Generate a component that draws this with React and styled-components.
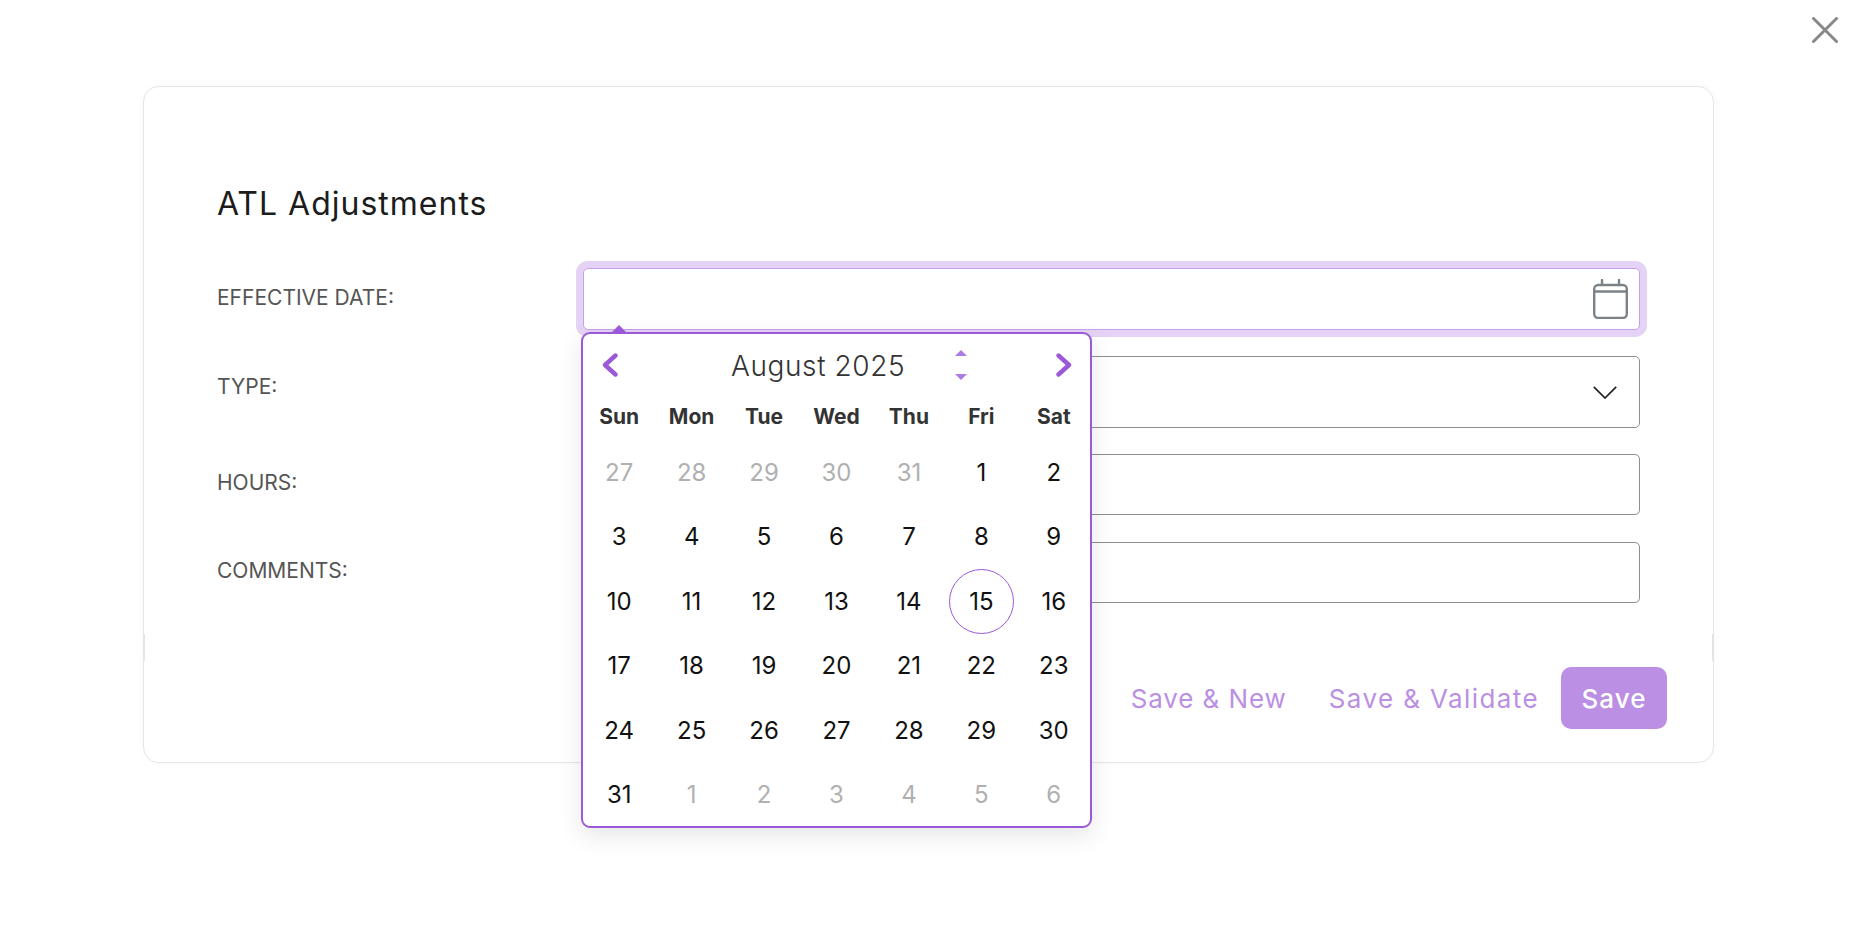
import styled, { createGlobalStyle } from 'styled-components'

const GlobalStyle = createGlobalStyle`
  html, body { margin: 0; padding: 0; background: #fff; }
  body { font-family: Inter, "Open Sans", "Liberation Sans", sans-serif; }
`

const purple = '#9b59d9'
const soft = '#bb8fe3'

const weekDays = ['Sun', 'Mon', 'Tue', 'Wed', 'Thu', 'Fri', 'Sat']

// muted days spill over from July and September
const days = [
  ...[27, 28, 29, 30, 31].map(d => ({ d, muted: true })),
  ...Array.from({ length: 31 }, (_, i) => ({ d: i + 1 })),
  ...[1, 2, 3, 4, 5, 6].map(d => ({ d, muted: true }))
]

function CloseIcon() {
  return <CloseSvg viewBox='0 0 26 26' fill='none' stroke='#888' strokeWidth='3' strokeLinecap='round'>
    <path d='M1.5 1.5 L24.5 24.5 M24.5 1.5 L1.5 24.5' />
  </CloseSvg>
}

function CalendarIcon() {
  return <CalendarSvg viewBox='0 0 35 40' fill='none' stroke='#7b8389' strokeWidth='2.4' strokeLinecap='round'>
    <rect x='1.2' y='6' width='32.6' height='33' rx='4' />
    <path d='M1.2 12.5 H33.8 M9 1 V6 M26 1 V6' />
  </CalendarSvg>
}

function ChevronDown() {
  return <ChevronSvg viewBox='0 0 24 13' fill='none' stroke='#222' strokeWidth='1.7'>
    <path d='M0.8 0.8 L12 12 L23.2 0.8' />
  </ChevronSvg>
}

function Arrow({ dir }) {
  return <ArrowSvg viewBox='0 0 16 24' fill='none' stroke={purple} strokeWidth='4.4' strokeLinecap='round' strokeLinejoin='round'>
    <path d={dir === 'left' ? 'M13.5 2.5 L3 12 L13.5 21.5' : 'M2.5 2.5 L13 12 L2.5 21.5'} />
  </ArrowSvg>
}

function Calendar() {
  return <Popover>
    <Header>
      <Arrow dir='left' />
      <MonthTitle>August 2025</MonthTitle>
      <Spinner>
        <SpinUp />
        <SpinDown />
      </Spinner>
      <NextSlot><Arrow dir='right' /></NextSlot>
    </Header>
    <Grid>
      {weekDays.map(w => <WeekDay key={w}>{w}</WeekDay>)}
    </Grid>
    <Grid>
      {days.map((x, i) => <Day key={i} $muted={x.muted}>
        {!x.muted && x.d === 15 ? <Today>{x.d}</Today> : x.d}
      </Day>)}
    </Grid>
  </Popover>
}

export default function App() {
  return <>
    <GlobalStyle />
    <Page>
      <CloseIcon />
      <Card>
        <Title>ATL Adjustments</Title>
        <Form>
          <Label $top={17}>EFFECTIVE DATE:</Label>
          <DateField>
            <Field $focus />
            <IconSlot><CalendarIcon /></IconSlot>
            <Calendar />
          </DateField>

          <Label $top={18}>TYPE:</Label>
          <SelectBox><ChevronDown /></SelectBox>

          <Label>HOURS:</Label>
          <Field />

          <Label $top={17}>COMMENTS:</Label>
          <Field $drop={1} />
        </Form>
        <Footer>
          <LinkButton $spacing={.9}>Save &amp; New</LinkButton>
          <LinkButton $spacing={1.4}>Save &amp; Validate</LinkButton>
          <SaveButton>Save</SaveButton>
        </Footer>
      </Card>
    </Page>
  </>
}

const Page = styled.div`
  position: relative;
  height: 941px;
  padding-top: 86px;
  box-sizing: border-box;
  overflow: hidden;
`

const CloseSvg = styled.svg`
  position: absolute;
  top: 17px; right: 20px;
  width: 26px; height: 26px;
`

const Card = styled.section`
  position: relative;
  box-sizing: border-box;
  width: 1571px; height: 677px;
  margin-left: 143px;
  padding: 98px 73px 0;
  background: #fff;
  border: 1px solid #e6e6e6;
  border-radius: 16px;
  box-shadow: 0 0 6px rgba(0, 0, 0, .03);

  &::before, &::after {
    content: '';
    position: absolute;
    top: 547px;
    width: 2px; height: 27px;
    background: #e4e4e4;
  }
  &::before { left: -1px; }
  &::after { right: -1px; }
`

const Title = styled.h1`
  margin: 0;
  font-size: 32px;
  font-weight: 400;
  line-height: 38px;
  letter-spacing: 1px;
  color: #1c1c1c;
`

const Form = styled.div`
  display: grid;
  grid-template-columns: 366px 1fr;
  row-gap: 26px;
  margin-top: 45px;
`

const Label = styled.label`
  padding-top: ${p => p.$top ?? 16}px;
  font-size: 21px;
  line-height: 26px;
  color: #555;
`

const Field = styled.input`
  display: block;
  box-sizing: border-box;
  width: 100%;
  height: ${p => p.$focus ? 62 : 61}px;
  margin-top: ${p => p.$drop ?? 0}px;
  background: #fff;
  border: 1px solid ${p => p.$focus ? '#c9a0ea' : '#8e8e8e'};
  border-radius: 5px;
  outline: none;
  box-shadow: ${p => p.$focus ? '0 0 0 7px #e4d3f4' : 'none'};
`

const DateField = styled.div`
  position: relative;
`

const IconSlot = styled.span`
  position: absolute;
  top: 11px; right: 12px;
  display: flex;
`

const CalendarSvg = styled.svg`
  width: 35px; height: 40px;
`

const SelectBox = styled.div`
  display: flex;
  align-items: center;
  justify-content: flex-end;
  box-sizing: border-box;
  height: 72px;
  padding-right: 22px;
  border: 1px solid #8e8e8e;
  border-radius: 5px;
`

const ChevronSvg = styled.svg`
  width: 24px; height: 13px;
`

const Footer = styled.div`
  display: flex;
  align-items: center;
  justify-content: flex-end;
  margin: 64px -27px 0 0;
`

const LinkButton = styled.button`
  margin-right: 22px;
  padding: 0;
  background: none;
  border: 0;
  font: 400 26px Inter, sans-serif;
  letter-spacing: ${p => p.$spacing}px;
  color: ${soft};
  & + & { margin-left: 20px; }
`

const SaveButton = styled.button`
  width: 106px; height: 62px;
  background: ${soft};
  border: 0;
  border-radius: 10px;
  font: 500 26px Inter, sans-serif;
  letter-spacing: 1px;
  color: #fff;
`

const Popover = styled.div`
  position: absolute;
  top: 64px; left: -2px;
  box-sizing: border-box;
  width: 511px; height: 496px;
  background: #fff;
  border: 2px solid ${purple};
  border-radius: 9px;
  box-shadow: 0 8px 24px rgba(0, 0, 0, .1);

  &::before {
    content: '';
    position: absolute;
    top: -9px; left: 29px;
    border: 7px solid transparent;
    border-top: 0;
    border-bottom: 7px solid ${purple};
  }
`

const Header = styled.div`
  display: flex;
  align-items: center;
  height: 61px;
  padding: 0 18px 0 19px;
`

const ArrowSvg = styled.svg`
  display: block;
  width: 16px; height: 24px;
`

const MonthTitle = styled.div`
  margin-left: 113px;
  padding-top: 2px;
  font-size: 28px;
  font-weight: 300;
  letter-spacing: .6px;
  color: #333;
`

const Spinner = styled.div`
  display: flex;
  flex-direction: column;
  gap: 18px;
  margin-left: 50px;
`

const SpinUp = styled.span`
  width: 0; height: 0;
  border: 6px solid transparent;
  border-top: 0;
  border-bottom: 6px solid #ab7ce4;
`

const SpinDown = styled.span`
  width: 0; height: 0;
  border: 6px solid transparent;
  border-bottom: 0;
  border-top: 6px solid #ab7ce4;
`

const NextSlot = styled.div`
  margin-left: auto;
`

const Grid = styled.div`
  display: grid;
  grid-template-columns: repeat(7, 1fr);
`

const WeekDay = styled.div`
  height: 45px;
  line-height: 44px;
  text-align: center;
  font-size: 21px;
  font-weight: 700;
  color: #333;
`

const Day = styled.div`
  display: flex;
  align-items: center;
  justify-content: center;
  height: 64.5px;
  font-size: 24px;
  color: ${p => p.$muted ? '#b0b0b0' : '#111'};
`

const Today = styled.span`
  display: flex;
  align-items: center;
  justify-content: center;
  box-sizing: border-box;
  width: 65px; height: 65px;
  border: 1px solid ${purple};
  border-radius: 50%;
`
